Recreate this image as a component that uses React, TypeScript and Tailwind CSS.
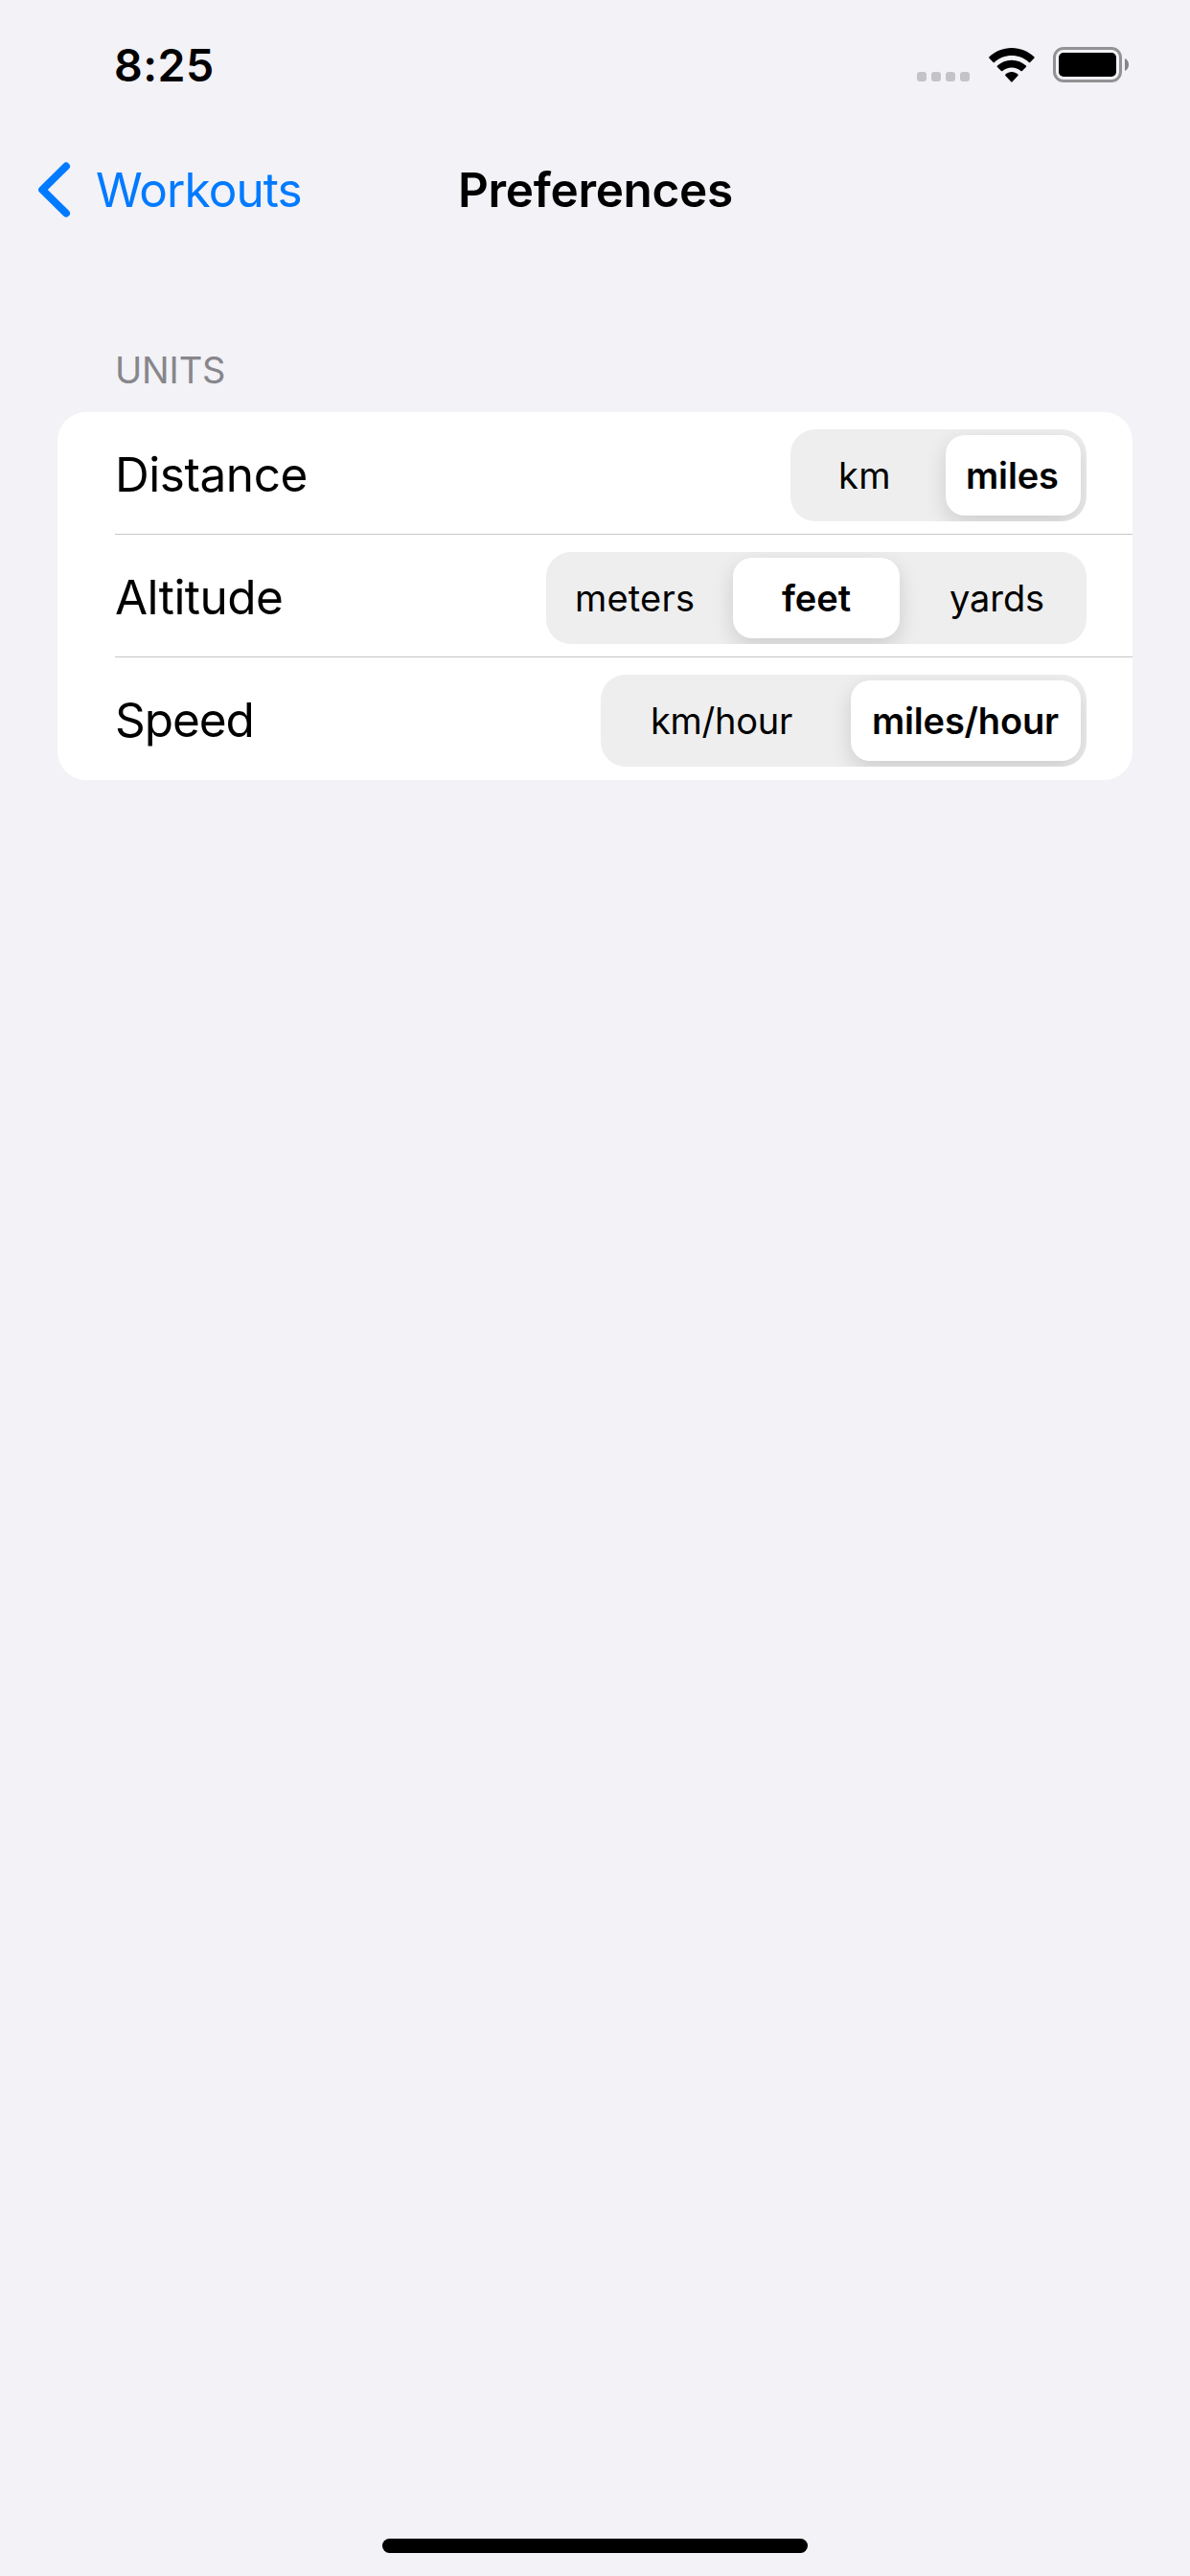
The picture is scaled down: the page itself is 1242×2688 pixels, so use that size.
type Segment = { text: string; box: string; selected?: boolean };
type Setting = { label: string; tracking: string; segments: Segment[] };

const settings: Setting[] = [
  {
    label: "Distance",
    tracking: "tracking-[-0.44px]",
    segments: [
      { text: "km", box: "w-[156px] pl-[44px] tracking-[0.5px]" },
      { text: "miles", box: "w-[141px] pl-[21px] tracking-[-0.14px]", selected: true },
    ],
  },
  {
    label: "Altitude",
    tracking: "tracking-[-0.55px]",
    segments: [
      { text: "meters", box: "w-[189px] pl-[24px] tracking-[0.2px]" },
      { text: "feet", box: "w-[174px] pl-[51px]", selected: true },
      { text: "yards", box: "w-[189px] pl-[52px] tracking-[-0.1px]" },
    ],
  },
  {
    label: "Speed",
    tracking: "tracking-[-1.07px]",
    segments: [
      { text: "km/hour", box: "w-[255px] pl-[46px] tracking-[-0.26px]" },
      { text: "miles/hour", box: "w-[240px] pl-[22px] tracking-[-0.17px]", selected: true },
    ],
  },
];

function StatusBar() {
  return (
    <div className="flex h-[135px] items-center justify-between pr-[64px] pl-[119px]">
      <span className="text-[46.5px] leading-[60px] font-semibold tracking-[0.48px]">8:25</span>
      <div className="flex items-center">
        <div className="mt-[25px] mr-[20px] flex gap-[5px]">
          {[0, 1, 2, 3].map((i) => (
            <span key={i} className="size-[10px] rounded-[3px] bg-[#c4c3c8]" />
          ))}
        </div>
        <svg className="mr-[19px] h-[36px] w-[48px]" viewBox="0 0 48 36">
          <path d="M23.9 0C33 0 41.200 3.500 47.300 9.300Q48 10 47.300 10.700L43.200 14.900Q42.500 15.500 41.800 14.900C37 10.500 30.800 8 23.900 8S10.800 10.500 6 14.900Q5.300 15.500 4.600 14.900L.500 10.700Q-.200 10 .500 9.300C6.600 3.500 14.800 0 23.900 0Z" />
          <path d="M23.900 12.700C29.700 12.700 34.900 14.900 38.900 18.500Q39.600 19.200 38.900 19.900L34.800 24Q34.100 24.600 33.400 24C30.800 21.800 27.500 20.500 23.900 20.500S17 21.800 14.400 24Q13.700 24.600 13 24L8.900 19.900Q8.200 19.200 8.900 18.500C12.900 14.900 18.100 12.700 23.900 12.700Z" />
          <path d="M23.900 25.100C26.300 25.100 28.600 26 30.400 27.600Q31.100 28.300 30.400 29L24.600 35.300Q23.900 36 23.200 35.300L17.400 29Q16.700 28.300 17.400 27.600C19.200 26 21.500 25.100 23.900 25.100Z" />
        </svg>
        <div className="flex h-[37px] w-[72px] rounded-[11px] border-[3px] border-[#929294] p-[3px]">
          <span className="flex-1 rounded-[5px] bg-black" />
        </div>
        <svg className="ml-[3px] h-[13px] w-[4px]" viewBox="0 0 4 13">
          <path fill="#858587" d="M0 0C2.500 1 4 3.700 4 6.500S2.500 12 0 13Z" />
        </svg>
      </div>
    </div>
  );
}

function NavBar() {
  return (
    <div className="grid h-[126px] grid-cols-[478px_1fr] items-center text-[49.5px] leading-[60px]">
      <button className="flex items-center pl-[40px] text-[#007aff]">
        <svg className="h-[58px] w-[34px]" viewBox="0 0 34 58" fill="none" stroke="currentColor" strokeWidth="8" strokeLinecap="round" strokeLinejoin="round">
          <path d="M29 4.500 4.200 29 29 53.500" />
        </svg>
        <span className="ml-[26px] tracking-[-0.94px]">Workouts</span>
      </button>
      <h1 className="font-semibold tracking-[-0.33px]">Preferences</h1>
    </div>
  );
}

function SegmentedControl({ segments }: { segments: Segment[] }) {
  return (
    <div className="flex h-[96px] overflow-hidden rounded-[26px] bg-[#eeeeee] p-[6px] text-[38px] leading-[84px]">
      {segments.map((s) => (
        <button
          key={s.text}
          className={`h-[84px] text-left whitespace-nowrap ${s.box} ${
            s.selected
              ? "rounded-[20px] bg-white font-semibold shadow-[0_8px_22px_rgba(0,0,0,0.14)]"
              : ""
          }`}
        >
          {s.text}
        </button>
      ))}
    </div>
  );
}

export default function App() {
  return (
    <div className="flex h-[2688px] w-[1242px] flex-col bg-[#f2f2f7] font-[Inter,sans-serif] text-black">
      <StatusBar />
      <NavBar />
      <main className="px-[60px] pt-[102px]">
        <h2 className="mb-[21px] pl-[60px] text-[38px] leading-[46px] tracking-[-0.16px] text-[#87868b]">UNITS</h2>
        <div className="rounded-[30px] bg-white pl-[60px]">
          {settings.map((s) => (
            <div
              key={s.label}
              className="flex h-[128px] items-center justify-between border-b border-[#c6c6c8] pt-[18px] pr-[48px] pb-[13px] last:border-transparent"
            >
              <span className={`pb-[2px] text-[49.5px] leading-[60px] ${s.tracking}`}>{s.label}</span>
              <SegmentedControl segments={s.segments} />
            </div>
          ))}
        </div>
      </main>
      <div className="mx-auto mt-auto mb-[24px] h-[15px] w-[444px] rounded-full bg-black" />
    </div>
  );
}
